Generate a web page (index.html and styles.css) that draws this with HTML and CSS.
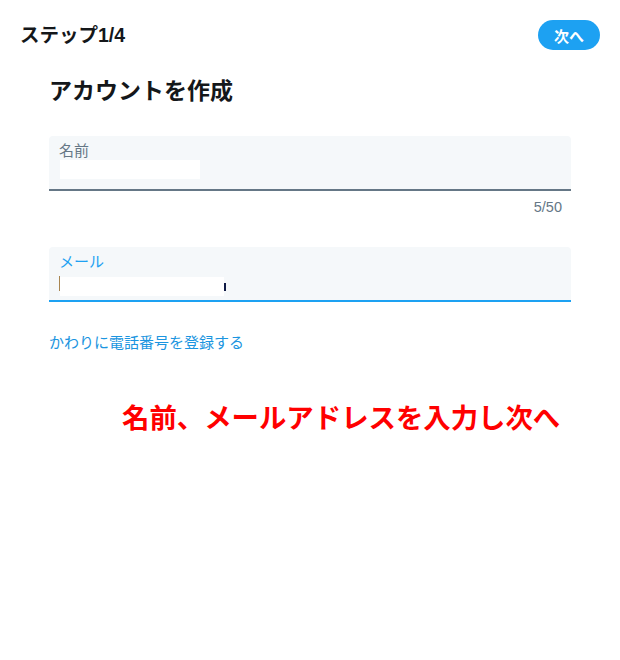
FILE: index.html
```html
<!DOCTYPE html>
<html lang="ja">
<head>
<meta charset="utf-8">
<title>アカウントを作成</title>
<link rel="stylesheet" href="styles.css">
</head>
<body>
<div class="page">
  <header class="header">
    <div class="step">ステップ1/4</div>
    <button class="next">次へ</button>
  </header>
  <main class="main">
    <h1 class="title">アカウントを作成</h1>
    <div class="field field-name">
      <div class="label">名前</div>
      <div class="name-row"><span class="mask mask-name"></span></div>
    </div>
    <div class="counter">5/50</div>
    <div class="field field-mail">
      <div class="label label-active">メール</div>
      <div class="mail-row"><span class="caret"></span><span class="mask mask-mail"></span><span class="bar"></span></div>
    </div>
    <a class="alt-link">かわりに電話番号を登録する</a>
    <p class="note">名前、メールアドレスを入力し次へ</p>
  </main>
</div>
</body>
</html>
```
FILE: styles.css
```css
* { box-sizing: border-box; }
html, body { margin: 0; padding: 0; background: #fff; }
body {
  font-family: "Liberation Sans", "Noto Sans CJK JP", sans-serif;
  color: #14171a;
}
.page { width: 620px; }
.header {
  height: 70px;
  padding: 0 20px;
  display: flex;
  align-items: center;
  justify-content: space-between;
}
.step {
  font-size: 19.5px;
  font-weight: bold;
  line-height: 24px;
}
.next {
  width: 62px;
  height: 30px;
  border: none;
  border-radius: 15px;
  background: #1da1f2;
  color: #fff;
  font-family: inherit;
  font-size: 15px;
  font-weight: bold;
  padding: 0;
}
.main { padding: 0 49px; }
.title {
  margin: 6px 0 30px 0;
  font-size: 23px;
  line-height: 30px;
  font-weight: bold;
}
.field {
  background: #f5f8fa;
  border-radius: 4px 4px 0 0;
  border-bottom: 2px solid #657786;
  height: 55px;
  padding: 5px 10px 0;
}
.field-mail { border-bottom-color: #1da1f2; }
.label {
  font-size: 15px;
  line-height: 19px;
  color: #657786;
}
.label-active { color: #1da1f2; }
.name-row { display: flex; height: 19px; }
.mask { display: block; background: #fff; }
.mask-name { width: 140px; height: 19px; margin-left: 1px; }
.counter {
  margin-top: 6px;
  text-align: right;
  padding-right: 9px;
  font-size: 14.5px;
  line-height: 20px;
  color: #657786;
}
.field-mail { margin-top: 30px; }
.mail-row {
  display: flex;
  align-items: flex-start;
  margin-top: 5px;
  height: 20px;
}
.caret { width: 1px; height: 15px; background: #a88550; }
.mask-mail { width: 164px; height: 19px; margin-top: 1px; }
.bar { width: 2px; height: 8px; margin-top: 7px; background: #0f1a45; }
.alt-link {
  display: block;
  margin-top: 31px;
  font-size: 15px;
  line-height: 20px;
  color: #1b95e0;
}
.note {
  margin: 49px 0 0 73px;
  font-size: 27.4px;
  line-height: 34px;
  font-weight: bold;
  color: #ff0000;
  white-space: nowrap;
}
```
